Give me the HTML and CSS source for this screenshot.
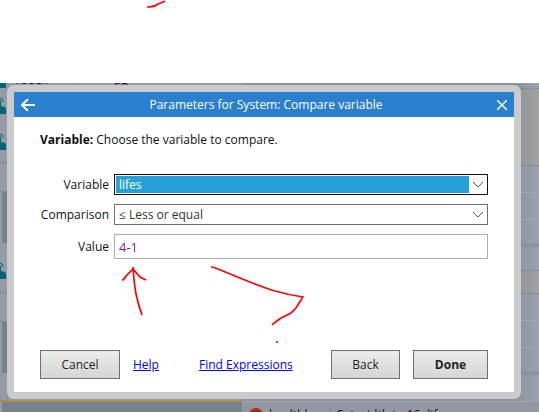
FILE: index.html
```html
<!DOCTYPE html>
<html lang="en">
<head>
    <meta charset="UTF-8">
    <meta name="viewport" content="width=device-width, initial-scale=1.0">
    <title>Parameters for System: Compare variable</title>
    <link rel="stylesheet" href="styles.css">
</head>
<body>
    <svg width="0" height="0" class="symbols">
        <symbol id="hand" viewBox="0 0 7 18">
            <path d="M0 2Q3 2 3 6" fill="none" stroke="#046575" stroke-width="1"/>
            <path d="M0 4Q1 4 1 6V10L5 11Q6 12 6 14V18H0Z" fill="#046575"/>
        </symbol>
        <symbol id="chevron" viewBox="0 0 12 7">
            <path d="M1 1L6 6L11 1" fill="none" stroke="#555" stroke-width="1"/>
        </symbol>
    </svg>

    <div class="editor">
        <!-- event sheet behind the dialog -->
        <div class="sheet">
            <div class="events">
                <div class="event first"><span class="object">Touch</span><span class="condition">pg</span></div>
                <div class="event tall"><svg class="hand"><use href="#hand"/></svg><svg class="hand"><use href="#hand"/></svg></div>
                <div class="event"></div>
                <div class="event group"></div>
                <div class="event middle"><svg class="hand"><use href="#hand"/></svg></div>
                <div class="event"></div>
                <div class="event group"></div>
                <div class="event selected"></div>
                <div class="event last"></div>
            </div>
            <div class="actions">
                <div class="action top"></div>
                <div class="action add tall"></div>
                <div class="action"></div>
                <div class="action"></div>
                <div class="action end"></div>
                <div class="action short"></div>
                <div class="action add"></div>
                <div class="action"></div>
                <div class="action"></div>
                <div class="action end"></div>
                <div class="action"></div>
                <div class="action last"><span class="dot"></span><span class="name">healthbar</span><span class="text">Set width to 16×lifes</span></div>
            </div>
        </div>

        <form class="dialog" id="parametersForm">
            <div class="titlebar">
                <button type="button" class="icon" aria-label="Go back">
                    <svg width="14" height="12" viewBox="0 0 14 12"><path d="M14 6H1M7 0L1 6L7 12" fill="none" stroke="#fff" stroke-width="2"/></svg>
                </button>
                <h1>Parameters for System: Compare variable</h1>
                <button type="button" class="icon" aria-label="Close">
                    <svg width="10" height="10" viewBox="0 0 10 10"><path d="M0 0L10 10M10 0L0 10" fill="none" stroke="#fff" stroke-width="1.4"/></svg>
                </button>
            </div>
            <div class="content">
                <p><b>Variable:</b> Choose the variable to compare.</p>
                <div class="fields">
                    <label for="variable">Variable</label>
                    <div class="select focused">
                        <select id="variable" name="variable"><option>lifes</option></select>
                        <svg width="12" height="7"><use href="#chevron"/></svg>
                    </div>
                    <label for="comparison">Comparison</label>
                    <div class="select">
                        <select id="comparison" name="comparison"><option>≤ Less or equal</option></select>
                        <svg width="12" height="7"><use href="#chevron"/></svg>
                    </div>
                    <label for="value">Value</label>
                    <div class="value"><input type="text" id="value" name="value" value="4-1"></div>
                </div>
                <div class="buttons">
                    <button type="button" class="cancel">Cancel</button>
                    <a href="#help">Help</a>
                    <a href="#expressions" class="find">Find Expressions</a>
                    <button type="button" class="back">Back</button>
                    <button type="submit" class="done">Done</button>
                </div>
            </div>
        </form>
    </div>

    <!-- red pen marks -->
    <svg class="marks" width="539" height="412" viewBox="0 0 539 412">
        <path d="M147 7Q154 7 158 4Q161 3 165 1"/>
        <path d="M142 315Q138 304 136 294Q134 283 133 267M122 280Q124 280 126 276L133 269L140 277L146 280"/>
        <path d="M211 267Q214 267 218 269L240 278Q264 288 275 291Q289 295 303 297L299 303L296 308L291 313L281 318Q275 322 272 325"/>
        <path d="M277 341V343"/>
    </svg>
</body>
</html>
```
FILE: styles.css
```css
* {
    box-sizing: border-box;
}

body {
    margin: 0;
    padding-top: 83px;
    height: 100vh;
    overflow: hidden;
    background-color: #fff;
    font-family: "Open Sans", "Noto Sans", sans-serif;
    font-size: 12px;
    line-height: 18px;
    color: #111;
}

.symbols {
    position: absolute;
}

.editor {
    position: relative;
    height: 100%;
    overflow: hidden;
}

.sheet {
    display: grid;
    grid-template-columns: 242px 1fr;
    height: 100%;
    background-color: #9699a0;
}

.event {
    height: 28px;
    padding-left: 2px;
    border-bottom: 1px solid #808a9b;
    background-color: #959ba7;
}

.event.first {
    display: flex;
    height: 5px;
    padding-left: 8px;
    line-height: 5px;
    border: none;
    border-left: 6px solid #046575;
    overflow: hidden;
}

.first .object {
    width: 62px;
    margin-top: -6px;
    border-right: 1px solid #808a9b;
}

.first .condition {
    margin: -6px 0 0 38px;
}

.event.tall {
    height: 76px;
    padding: 8px 0 0;
    border-bottom: 3px double #808a9b;
}

.event.middle {
    height: 48px;
    padding: 15px 0 0;
    border-bottom: 3px double #808a9b;
}

.event.group {
    height: 54px;
    border-left: 2px solid #959ba7;
    border-bottom: 3px solid #959ba7;
    border-radius: 0 0 0 4px;
    background-color: #78828f;
}

.event.selected {
    height: 26px;
    border: none;
    border-bottom: 2px solid #ab8f48;
    box-shadow: inset 7px 0 #959ba7, inset 8px 0 #ab8f48;
}

.event.last {
    height: 12px;
    border: none;
    border-left: 2px solid #959ba7;
    background-color: #78828f;
}

.hand {
    display: block;
    width: 7px;
    height: 18px;
    margin-bottom: 18px;
}

.action {
    height: 27px;
    border-bottom: 1px solid #9da4b0;
    background: linear-gradient(90deg, #8c929e 92%, #9da3ae);
}

.action.top {
    height: 6px;
    border-color: #858c9c;
}

.action.add {
    height: 23px;
    border-color: #858c9c;
    background: linear-gradient(90deg, #909194 92%, #a1a2a5);
}

.action.add.tall {
    height: 77px;
}

.action.short {
    height: 24px;
    border-color: #858c9c;
}

.action.end {
    height: 27px;
    border-bottom: 3px double #808a9b;
}

.action.last {
    display: flex;
    height: 11px;
    padding: 6px 0 0 7px;
    border: none;
    background: #9297a1;
    line-height: 14px;
    white-space: nowrap;
    overflow: hidden;
}

.dot {
    flex: none;
    width: 14px;
    height: 14px;
    border-radius: 50%;
    background-color: #b3261c;
}

.name {
    width: 68px;
    padding-left: 6px;
    border-right: 1px solid #808a9b;
}

.text {
    padding-left: 6px;
}

.dialog {
    position: absolute;
    top: 2px;
    left: 7px;
    right: 18px;
    border: 7px solid #cbcbcb;
    border-radius: 7px;
    background-color: #fff;
}

.titlebar {
    display: flex;
    align-items: center;
    justify-content: space-between;
    height: 25px;
    padding: 0 7px;
    background-color: #2a80cf;
    color: #fff;
}

.titlebar h1 {
    margin: 0;
    font-size: 12px;
    font-weight: normal;
    line-height: 27px;
}

.icon {
    display: flex;
    padding: 0;
    border: none;
    background: none;
    cursor: pointer;
}

.content {
    padding: 14px 26px 13px;
}

.content p {
    margin: 0 0 25px;
}

.fields {
    display: grid;
    grid-template-columns: 69px 1fr;
    column-gap: 5px;
    row-gap: 9px;
    align-items: center;
    margin-bottom: 91px;
}

.fields label {
    text-align: right;
}

.select {
    display: grid;
    grid-template-columns: 1fr 16px;
    column-gap: 1px;
    align-items: center;
    justify-items: center;
    height: 21px;
    padding: 1px;
    border: 1px solid #707070;
}

.select.focused {
    border-color: #111;
}

.select select {
    width: 100%;
    height: 17px;
    padding: 0 3px;
    border: none;
    outline: none;
    appearance: none;
    background-color: #fff;
    color: #333;
    font: inherit;
    line-height: 17px;
}

.select.focused select {
    background-color: #26a0da;
    color: #fff;
}

.value {
    height: 25px;
    border: 1px solid #abadb3;
}

.value input {
    display: block;
    width: 100%;
    height: 23px;
    padding: 0 4px;
    border: none;
    outline: none;
    font: inherit;
    font-size: 13px;
    /* numbers purple, operator blue */
    background: linear-gradient(90deg, #a010a0 11px, #1010ff 11px, #1010ff 16px, #a010a0 16px);
    background-clip: text;
    -webkit-background-clip: text;
    color: transparent;
}

.buttons {
    display: flex;
    align-items: center;
}

.buttons button {
    height: 29px;
    padding: 0;
    border: 1px solid #707070;
    background: linear-gradient(#ebebeb, #d5d5d5);
    color: #222;
    font: inherit;
    cursor: pointer;
}

.buttons a {
    color: #0000ff;
}

.buttons .cancel {
    width: 80px;
    margin-right: 13px;
}

.buttons .find {
    margin-left: 40px;
}

.buttons .back {
    width: 69px;
    margin-left: auto;
}

.buttons .done {
    width: 75px;
    margin-left: 13px;
    font-weight: bold;
}

.marks {
    position: absolute;
    top: 0;
    left: 0;
    fill: none;
    stroke: #f00;
    stroke-width: 1.7;
    pointer-events: none;
}
```
